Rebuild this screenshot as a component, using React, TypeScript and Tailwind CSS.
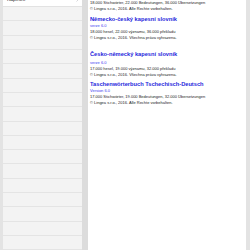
const rows = Array.from({ length: 17 });

type Product = {
  title: string;
  version: string;
  stats: string;
  copy: string;
  gap: string;
  versionGap: string;
};

const products: Product[] = [
  {
    title: "Německo-český kapesní slovník",
    version: "verze 6.0",
    stats: "18.000 hesel, 22.000 významů, 36.000 překladů",
    copy: "© Lingea s.r.o., 2016. Všechna práva vyhrazena.",
    gap: "mt-[3.5px]",
    versionGap: "mt-0",
  },
  {
    title: "Česko-německý kapesní slovník",
    version: "verze 6.0",
    stats: "17.000 hesel, 19.000 významů, 32.000 překladů",
    copy: "© Lingea s.r.o., 2016. Všechna práva vyhrazena.",
    gap: "mt-[10.5px]",
    versionGap: "mt-[2px]",
  },
  {
    title: "Taschenwörterbuch Tschechisch-Deutsch",
    version: "Version 6.0",
    stats: "17.000 Stichwörter, 19.000 Bedeutungen, 32.000 Übersetzungen",
    copy: "© Lingea s.r.o., 2016. Alle Rechte vorbehalten.",
    gap: "mt-[2.8px]",
    versionGap: "mt-0",
  },
];

export default function App() {
  return (
    <div className="flex h-[250px] w-[250px] overflow-hidden bg-[#e3e3e3] font-['Liberation_Sans',Arial,sans-serif]">
      {/* sidebar */}
      <div className="ml-[3px] flex w-[79px] flex-col bg-[#f3f3f3]">
        <div className="-mt-[7.15px] flex h-[14.3px] shrink-0 items-center justify-between border-b border-[#e2e2e2] bg-white pl-[4px] pr-[3px]">
          <span className="text-[5px] leading-none text-[#222]">Kapesní</span>
          <svg width="3" height="5" viewBox="0 0 3 5" className="text-[#c7c7cc]">
            <path d="M0.5 0.5 L2.5 2.5 L0.5 4.5" fill="none" stroke="currentColor" strokeWidth="0.7" />
          </svg>
        </div>
        {rows.map((_, i) => (
          <div key={i} className="h-[14.3px] shrink-0 border-b border-[#e4e4e4]" />
        ))}
      </div>
      <div className="w-[6px] shrink-0 bg-[#dcdcdc]" />
      {/* detail */}
      <div className="flex w-[158px] flex-col bg-white pl-[2px] text-[4px] leading-[6px] text-[#222]">
        <p className="whitespace-nowrap">18.000 Stichwörter, 22.000 Bedeutungen, 36.000 Übersetzungen</p>
        <p className="whitespace-nowrap">© Lingea s.r.o., 2016. Alle Rechte vorbehalten.</p>
        {products.map((p) => (
          <div key={p.title} className={p.gap}>
            <p className="whitespace-nowrap text-[5.7px] font-bold leading-[7px] text-[#1f1fdc]">{p.title}</p>
            <p className={`whitespace-nowrap text-[#3d3df0] ${p.versionGap}`}>{p.version}</p>
            <p className="whitespace-nowrap">{p.stats}</p>
            <p className="whitespace-nowrap">{p.copy}</p>
          </div>
        ))}
      </div>
    </div>
  );
}
